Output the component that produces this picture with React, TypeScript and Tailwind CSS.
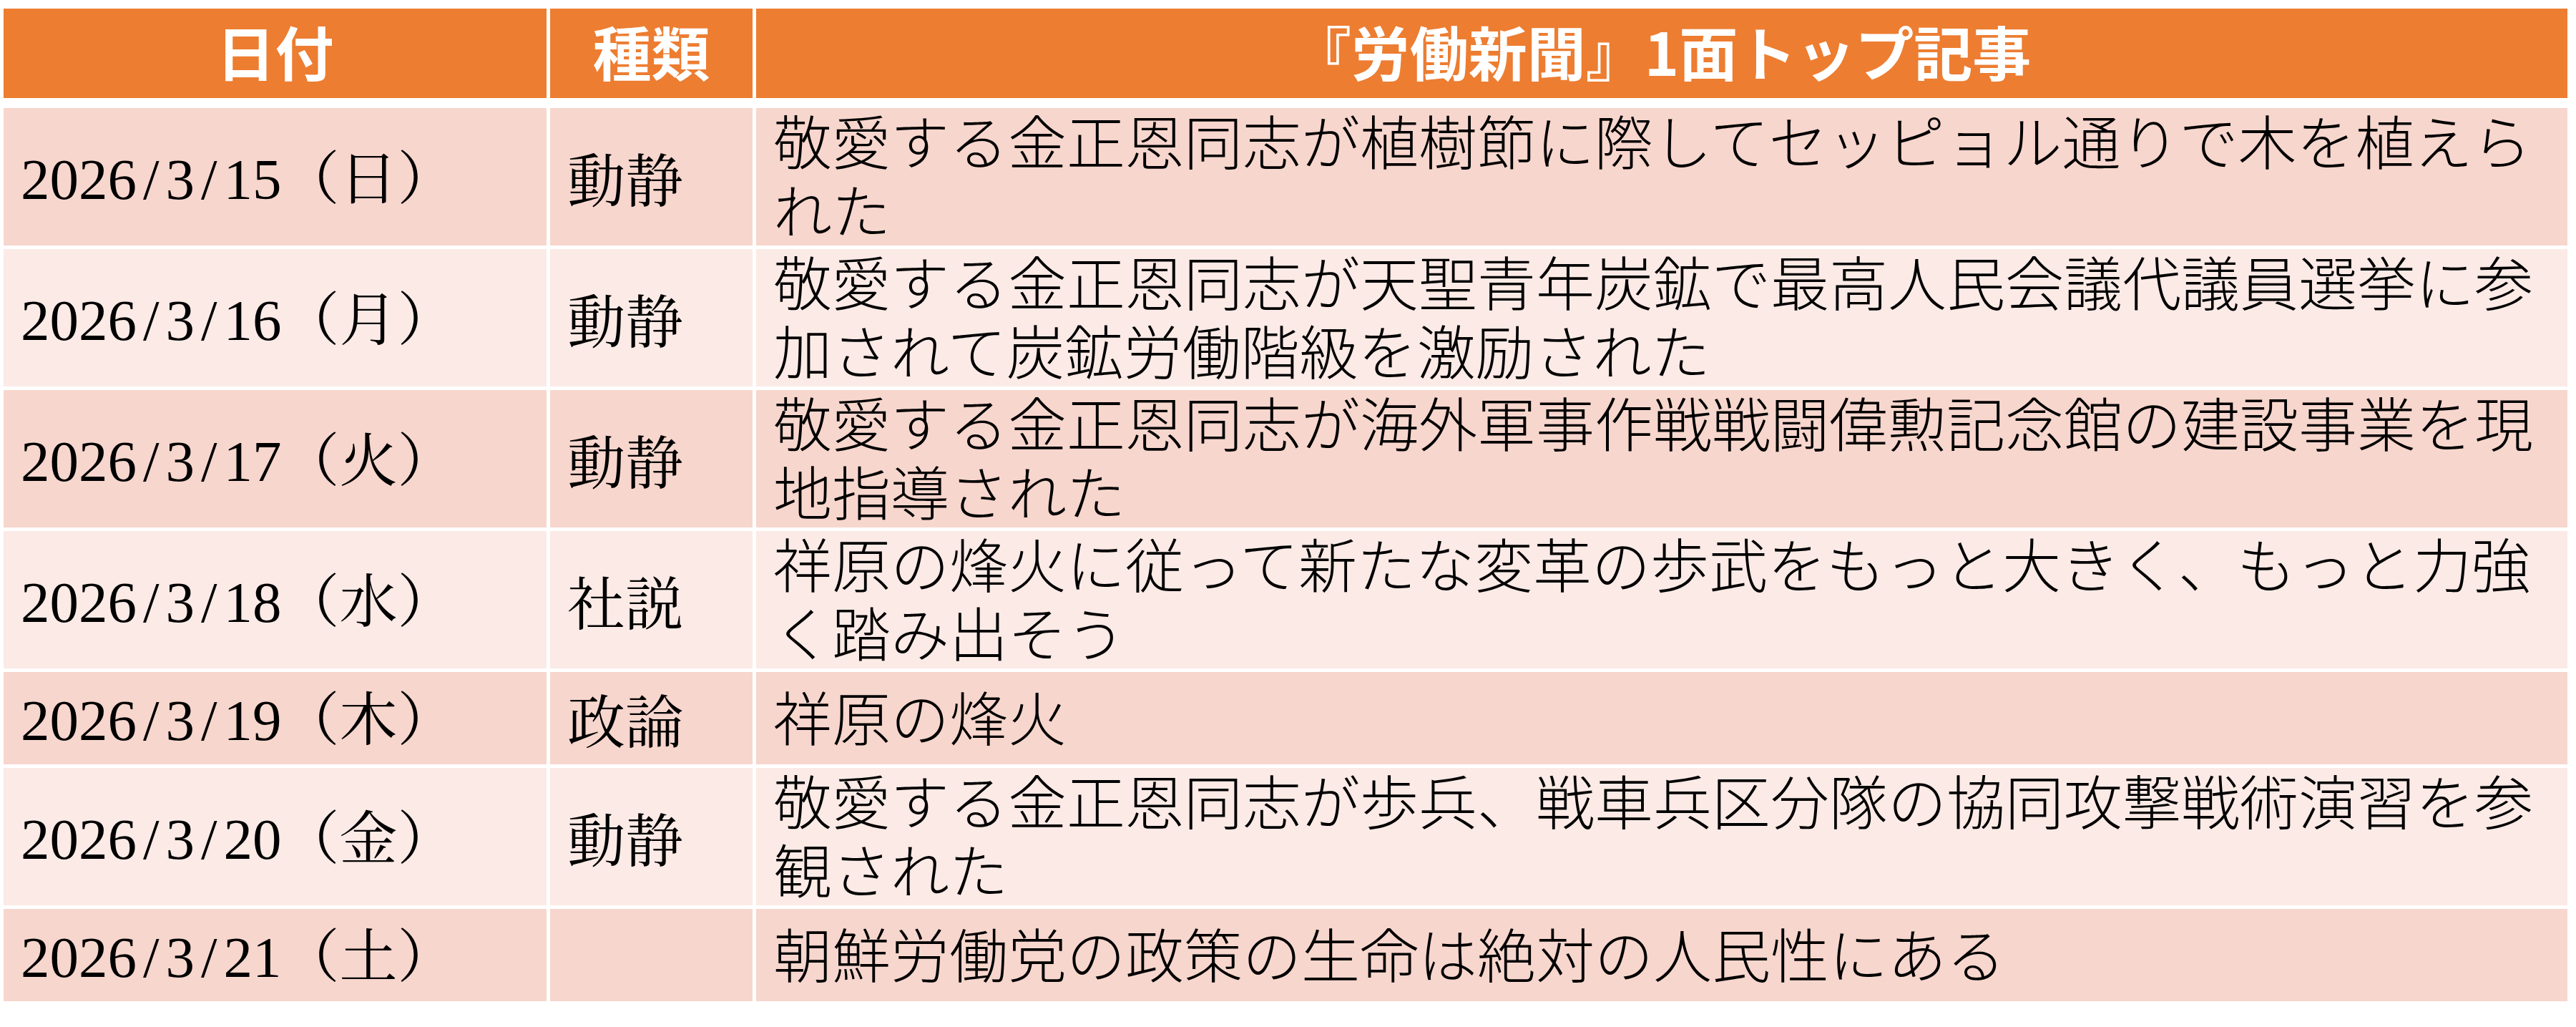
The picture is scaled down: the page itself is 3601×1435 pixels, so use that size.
import React from 'react';

type Row = {
  date: string;
  day: string;
  kind: string;
  title: string;
};

const rows: Row[] = [
  { date: '2026/3/15', day: '日', kind: '動静', title: '敬愛する金正恩同志が植樹節に際してセッピョル通りで木を植えられた' },
  { date: '2026/3/16', day: '月', kind: '動静', title: '敬愛する金正恩同志が天聖青年炭鉱で最高人民会議代議員選挙に参加されて炭鉱労働階級を激励された' },
  { date: '2026/3/17', day: '火', kind: '動静', title: '敬愛する金正恩同志が海外軍事作戦戦闘偉勲記念館の建設事業を現地指導された' },
  { date: '2026/3/18', day: '水', kind: '社説', title: '祥原の烽火に従って新たな変革の歩武をもっと大きく、もっと力強く踏み出そう' },
  { date: '2026/3/19', day: '木', kind: '政論', title: '祥原の烽火' },
  { date: '2026/3/20', day: '金', kind: '動静', title: '敬愛する金正恩同志が歩兵、戦車兵区分隊の協同攻撃戦術演習を参観された' },
  { date: '2026/3/21', day: '土', kind: '', title: '朝鮮労働党の政策の生命は絶対の人民性にある' },
];

// Mincho-style date: half-width digits and slashes all take 0.5em
const DateText = ({ date, day }: { date: string; day: string }) => (
  <span className="whitespace-nowrap">
    {date.split('').map((ch, i) =>
      ch === '/' ? (
        <span key={i} className="inline-block w-[0.5em] text-center">/</span>
      ) : (
        <span key={i}>{ch}</span>
      )
    )}
    <span className="font-['Noto_Serif_CJK_JP','Noto_Sans_CJK_JP',serif]">（{day}）</span>
  </span>
);

const App = () => {
  return (
    <div className="min-h-screen bg-white pt-[12px] pl-[5px] pr-[12px]">
      {/* header */}
      <div className="grid grid-cols-[759px_283px_2532px] gap-x-[5px] mb-[14px] font-['Noto_Sans_CJK_JP',sans-serif] font-bold text-[82px] text-white">
        <div className="h-[125px] bg-[#ED7D31] flex items-center justify-center">
          <span className="-translate-y-1 leading-none">日付</span>
        </div>
        <div className="h-[125px] bg-[#ED7D31] flex items-center justify-center">
          <span className="-translate-y-1 leading-none">種類</span>
        </div>
        <div className="h-[125px] bg-[#ED7D31] flex items-center justify-center">
          <span className="-translate-y-1 leading-none">『労働新聞』1面トップ記事</span>
        </div>
      </div>

      {/* body rows */}
      <div className="flex flex-col gap-y-[5px]">
        {rows.map((row, idx) => {
          const bg = idx % 2 === 0 ? 'bg-[#F7D6CD]' : 'bg-[#FBEAE6]';
          return (
            <div key={row.date} className="grid grid-cols-[759px_283px_2532px] gap-x-[5px] text-black">
              <div className={`${bg} min-h-[129px] flex items-center pl-[24px] font-['Liberation_Serif','Noto_Serif_CJK_JP',serif] text-[81px] leading-none`}>
                <DateText date={row.date} day={row.day} />
              </div>
              <div className={`${bg} min-h-[129px] flex items-center pl-[24px] font-['Noto_Serif_CJK_JP','Noto_Sans_CJK_JP',serif] text-[81px] leading-none`}>
                {row.kind}
              </div>
              <div className={`${bg} min-h-[129px] flex items-center pl-[24px] pr-[24px] font-['Noto_Sans_CJK_JP',sans-serif] font-light text-[82px]`}>
                <p className="-translate-y-1 leading-[96px]">{row.title}</p>
              </div>
            </div>
          );
        })}
      </div>
    </div>
  );
};

export default App;
